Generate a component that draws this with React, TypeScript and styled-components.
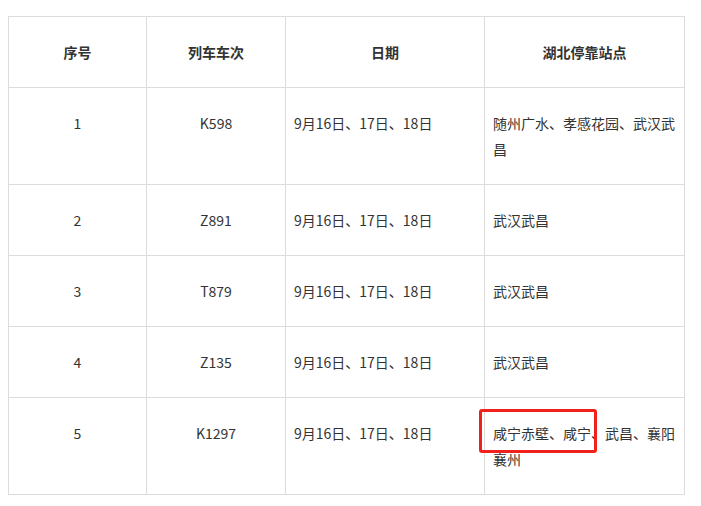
import { FC } from 'react'
import styled, { createGlobalStyle } from 'styled-components'

const GlobalStyle = createGlobalStyle`
  body {
    margin: 0;
    background: #fff;
    font-family: "Noto Sans CJK SC", "Open Sans", sans-serif;
    color: #333;
  }
`

const Page = styled.div`
  padding: 16px 0 0 8px;
`

const Table = styled.table`
  border-collapse: collapse;
  table-layout: fixed;
  width: 677px;
  font-size: 14px;
  line-height: 26px;
`

const Cell = styled.td<{ $align?: 'left' | 'center' }>`
  position: relative;
  border: 1px solid #dcdcdc;
  padding: 22px 8px;
  text-align: ${(p) => p.$align || 'center'};
  vertical-align: top;
  word-break: break-all;
`

const Head = styled(Cell).attrs({ as: 'th' })`
  font-weight: bold;
  vertical-align: middle;
`

const Mark = styled.span`
  position: absolute;
  left: -6px;
  top: 11px;
  width: 118px;
  height: 44px;
  border: 3px solid #f0201c;
  border-radius: 3px;
  box-sizing: border-box;
  pointer-events: none;
`

const dates = '9月16日、17日、18日'

const rows = [
  { no: '1', train: 'K598', stops: '随州广水、孝感花园、武汉武昌' },
  { no: '2', train: 'Z891', stops: '武汉武昌' },
  { no: '3', train: 'T879', stops: '武汉武昌' },
  { no: '4', train: 'Z135', stops: '武汉武昌' },
  { no: '5', train: 'K1297', stops: '咸宁赤壁、咸宁、武昌、襄阳襄州', marked: true },
]

const App: FC = () => (
  <Page>
    <GlobalStyle />
    <Table>
      <colgroup>
        <col style={{ width: 138 }} />
        <col style={{ width: 139 }} />
        <col style={{ width: 199 }} />
        <col style={{ width: 200 }} />
      </colgroup>
      <thead>
        <tr>
          <Head>序号</Head>
          <Head>列车车次</Head>
          <Head>日期</Head>
          <Head>湖北停靠站点</Head>
        </tr>
      </thead>
      <tbody>
        {rows.map((r) => (
          <tr key={r.no}>
            <Cell>{r.no}</Cell>
            <Cell>{r.train}</Cell>
            <Cell $align="left">{dates}</Cell>
            <Cell $align="left">
              {r.stops}
              {r.marked && <Mark />}
            </Cell>
          </tr>
        ))}
      </tbody>
    </Table>
  </Page>
)

export default App
